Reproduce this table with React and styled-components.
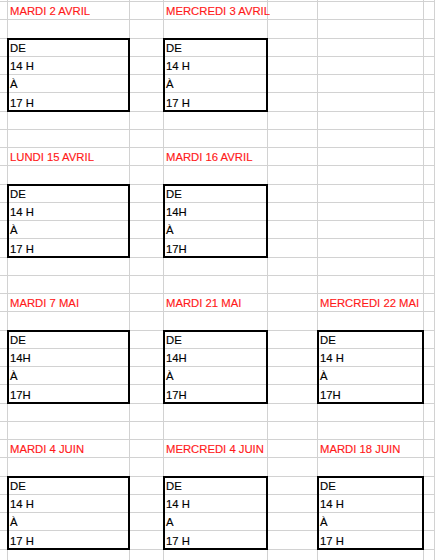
import React from 'react';
import styled, { createGlobalStyle } from 'styled-components';

const GlobalStyle = createGlobalStyle`
  html, body {
    margin: 0;
    padding: 0;
    background: #ffffff;
  }
`;

const ROWS = 31;
const COLS = 7;

const Sheet = styled.div`
  display: grid;
  grid-template-columns: 8px 122px 34px 104px 50px 106px 1fr;
  grid-template-rows: 2px repeat(${ROWS}, 18.26px);
  width: 435px;
  height: 560px;
  overflow: hidden;
  font-family: "Liberation Sans", Arial, sans-serif;
  font-size: 11.3px;
`;

const Cell = styled.div`
  grid-row: ${(p) => p.$row};
  grid-column: ${(p) => p.$col};
  box-sizing: border-box;
  border-right: 1px solid #d2d2d2;
  border-bottom: 1px solid #d2d2d2;
  display: flex;
  align-items: flex-end;
  padding: 0 0 1px 2px;
  white-space: nowrap;
  color: ${(p) => (p.$red ? '#ff1a1a' : '#000000')};
  -webkit-text-stroke: 0.15px currentColor;
  line-height: 13px;
`;

const Box = styled.div`
  grid-row: ${(p) => p.$row} / span 4;
  grid-column: ${(p) => p.$col};
  margin: -1px 0 0 -1px;
  border: 2px solid #000000;
  box-sizing: border-box;
  z-index: 1;
`;

const sections = [
  {
    start: 0,
    days: [
      { col: 2, title: 'MARDI 2 AVRIL', lines: ['DE', '14 H', 'À', '17 H'] },
      { col: 4, title: 'MERCREDI 3 AVRIL', lines: ['DE', '14 H', 'À', '17 H'] },
    ],
  },
  {
    start: 8,
    days: [
      { col: 2, title: 'LUNDI 15 AVRIL', lines: ['DE', '14 H', 'À', '17 H'] },
      { col: 4, title: 'MARDI 16 AVRIL', lines: ['DE', '14H', 'À', '17H'] },
    ],
  },
  {
    start: 16,
    days: [
      { col: 2, title: 'MARDI 7 MAI', lines: ['DE', '14H', 'À', '17H'] },
      { col: 4, title: 'MARDI 21 MAI', lines: ['DE', '14H', 'À', '17H'] },
      { col: 6, title: 'MERCREDI 22 MAI', lines: ['DE', '14 H', 'À', '17H'] },
    ],
  },
  {
    start: 24,
    days: [
      { col: 2, title: 'MARDI 4 JUIN', lines: ['DE', '14 H', 'À', '17 H'] },
      { col: 4, title: 'MERCREDI 4 JUIN', lines: ['DE', '14 H', 'A', '17 H'] },
      { col: 6, title: 'MARDI 18 JUIN', lines: ['DE', '14 H', 'À', '17 H'] },
    ],
  },
];

// grid row 1 is the thin strip above the first data row
const gridRow = (k) => k + 2;

const buildContent = () => {
  const content = {};
  sections.forEach(({ start, days }) => {
    days.forEach(({ col, title, lines }) => {
      content[`${gridRow(start)}-${col}`] = { text: title, red: true };
      lines.forEach((line, i) => {
        content[`${gridRow(start + 2 + i)}-${col}`] = { text: line };
      });
    });
  });
  return content;
};

const App = () => {
  const content = buildContent();
  const cells = [];
  for (let r = 1; r <= ROWS + 1; r++) {
    for (let c = 1; c <= COLS; c++) {
      const item = content[`${r}-${c}`];
      cells.push(
        <Cell key={`${r}-${c}`} $row={r} $col={c} $red={item && item.red}>
          {item ? item.text : null}
        </Cell>
      );
    }
  }

  return (
    <>
      <GlobalStyle />
      <Sheet>
        {cells}
        {sections.map(({ start, days }) =>
          days.map(({ col }) => (
            <Box key={`${start}-${col}`} $row={gridRow(start + 2)} $col={col} />
          ))
        )}
      </Sheet>
    </>
  );
};

export default App;
